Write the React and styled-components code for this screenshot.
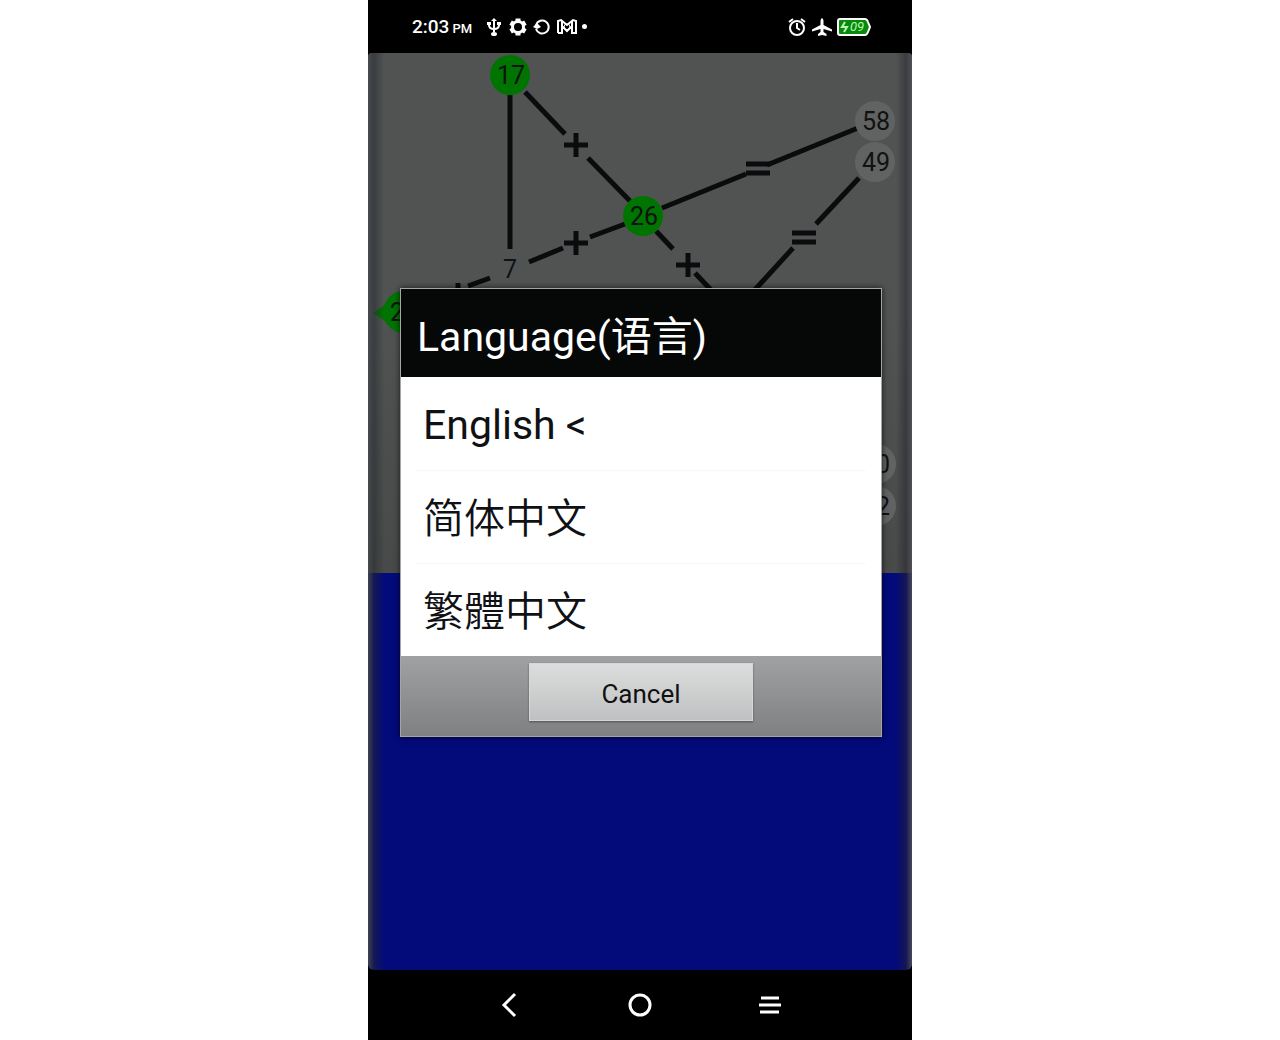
import React from "react";
import styled, { createGlobalStyle } from "styled-components";

const languages = [
  { id: "en", label: "English <" },
  { id: "zh-Hans", label: "简体中文" },
  { id: "zh-Hant", label: "繁體中文" },
];

const edges = [
  [142, 42, 142, 196],
  [157, 39, 197, 81],
  [220, 105, 262, 148],
  [161, 209, 195, 195],
  [222, 184, 257, 171],
  [294, 155, 378, 121],
  [399, 112, 490, 75],
  [288, 178, 305, 196],
  [327, 220, 344, 238],
  [491, 125, 448, 171],
  [425, 195, 384, 240],
  [122, 225, 100, 233],
];

const pluses = [
  [208, 92],
  [208, 190],
  [320, 212],
  [90, 242],
];

const equals = [
  [390, 115],
  [436, 184],
];

const nodes = [
  { x: 142, y: 22, text: "17", green: true },
  { x: 275, y: 163, text: "26", green: true },
  { x: 507, y: 68, text: "58" },
  { x: 507, y: 109, text: "49" },
  { x: 508, y: 411, text: "0", textX: 515 },
  { x: 508, y: 453, text: "2", textX: 515 },
];

export default function App() {
  return (
    <>
      <GlobalStyle />
      <Phone>
        <StatusBar />
        <Screen>
          <Board />
          <Ground />
          <Overlay>
            <LanguageDialog />
          </Overlay>
        </Screen>
        <NavBar />
      </Phone>
    </>
  );
}

function StatusBar() {
  return (
    <Status>
      <StatusGroup>
        <Clock>
          2:03<small>PM</small>
        </Clock>
        <StatusIcon $w={20} viewBox="0 0 20 20">
          <path d="M10 3v12M5 6v2q0 4 5 4t5-4V6" strokeWidth="2" />
          <path d="M10 1l3 3H7zM3 5h4v3H3zM13 5h4v3h-4z" fill="#fff" stroke="none" />
          <ellipse cx="10" cy="17" rx="3" ry="2" fill="#fff" stroke="none" />
        </StatusIcon>
        <StatusIcon $w={20} viewBox="0 0 20 20">
          <circle cx="10" cy="10" r="5.500" strokeWidth="3" />
          <path
            d="M10 1.500v3M10 15.500v3M2.600 5.700l2.600 1.500M14.800 12.800l2.600 1.500M2.600 14.300l2.600-1.500M14.800 7.200l2.600-1.500"
            strokeWidth="5"
          />
        </StatusIcon>
        <StatusIcon $w={20} viewBox="0 0 20 20">
          <path d="M4 8a6.500 6.500 0 1 1 0 4" strokeWidth="2" />
          <path d="M1 10l4-4 4 4-4 2z" fill="#fff" stroke="none" />
        </StatusIcon>
        <StatusIcon $w={22} viewBox="0 0 22 20">
          <path
            d="M2 16V4l3-1 6 5 6-5 3 1v12h-4V9M6 9v7H2M6 9l5 5 5-5M6 4v6M16 4v6"
            strokeWidth="2"
          />
          <circle cx="11" cy="10" r="3" strokeWidth="1" />
        </StatusIcon>
        <Dot />
      </StatusGroup>
      <StatusGroup>
        <StatusIcon $w={20} viewBox="0 0 20 20">
          <circle cx="10" cy="11" r="7" strokeWidth="2" />
          <path d="M10 6v5l3 2M2 5l4-3M14 2l4 3" strokeWidth="2" />
        </StatusIcon>
        <StatusIcon $w={22} viewBox="0 0 22 20">
          <path
            d="M11 1q1.500 1 1.500 3v4l8.500 4.500v2l-8.500-2.500v3l3 2v2L11 18l-4 1v-2l2.500-2v-3L1 14.500v-2L9.500 8V4q0-2 1.500-3z"
            fill="#fff"
            stroke="none"
          />
        </StatusIcon>
        <StatusIcon $w={34} viewBox="0 0 34 20">
          <path
            d="M3 2h25q2 0 3 3l2 5-2 5q-1 3-3 3H3q-2 0-2-2V4q0-2 2-2z"
            fill="#078a0c"
            strokeWidth="2"
          />
          <path d="M8 5l-3 5h5l-3 5" stroke="#b8f5b0" strokeWidth="2" />
          <BatteryText x="20" y="14">
            09
          </BatteryText>
        </StatusIcon>
      </StatusGroup>
    </Status>
  );
}

function Board() {
  return (
    <BoardArea>
      <Graph viewBox="0 0 544 520">
        {edges.map(([x1, y1, x2, y2]) => (
          <line key={`${x1}-${y1}`} x1={x1} y1={y1} x2={x2} y2={y2} strokeWidth="5" />
        ))}
        {pluses.map(([x, y]) => (
          <path key={`${x}-${y}`} d={`M${x - 12} ${y}h24M${x} ${y - 12}v24`} strokeWidth="5" />
        ))}
        {equals.map(([x, y]) => (
          <path key={`${x}-${y}`} d={`M${x - 12} ${y - 4}h24M${x - 12} ${y + 5}h24`} strokeWidth="5" />
        ))}
        {nodes.map((n) => (
          <g key={n.text}>
            <circle cx={n.x} cy={n.y} r="20" fill={n.green ? "#007400" : "#616262"} stroke="none" />
            <NodeText x={n.textX || n.x + 1} y={n.y + 9}>
              {n.text}
            </NodeText>
          </g>
        ))}
        <NodeText x="142" y="225">
          7
        </NodeText>
        <circle cx="36" cy="259" r="21" fill="#007400" stroke="none" />
        <path d="M5 260l16-11v22z" fill="#007400" stroke="none" />
        <NodeText x="29" y="268">
          2
        </NodeText>
      </Graph>
    </BoardArea>
  );
}

function LanguageDialog() {
  return (
    <Dialog role="dialog" aria-labelledby="language-title">
      <Title id="language-title">Language(语言)</Title>
      <List>
        {languages.map((l) => (
          <Item key={l.id}>
            <Option type="button" lang={l.id}>
              {l.label}
            </Option>
          </Item>
        ))}
      </List>
      <Footer>
        <CancelButton type="button">Cancel</CancelButton>
      </Footer>
    </Dialog>
  );
}

function NavBar() {
  return (
    <Nav>
      <NavButton type="button" aria-label="Back">
        <svg width="28" height="28" viewBox="0 0 28 28">
          <path d="M19 3L8 14l11 11" />
        </svg>
      </NavButton>
      <NavButton type="button" aria-label="Home">
        <svg width="28" height="28" viewBox="0 0 28 28">
          <circle cx="14" cy="14" r="10" />
        </svg>
      </NavButton>
      <NavButton type="button" aria-label="Menu">
        <svg width="28" height="28" viewBox="0 0 28 28">
          <path d="M5 7h18M3 14h22M4 21h19" />
        </svg>
      </NavButton>
    </Nav>
  );
}

const GlobalStyle = createGlobalStyle`
  * {
    box-sizing: border-box;
  }
  body {
    margin: 0;
    background: #fff;
    font-family: Roboto, "Noto Sans CJK SC", sans-serif;
  }
  button {
    font-family: inherit;
    border: 0;
    padding: 0;
    cursor: pointer;
  }
`;

const Phone = styled.main`
  display: flex;
  flex-direction: column;
  max-width: 544px;
  min-height: 100vh;
  margin: 0 auto;
  background: #000;
`;

const Status = styled.header`
  display: flex;
  align-items: center;
  justify-content: space-between;
  height: 53px;
  padding: 0 41px 0 44px;
  color: #fff;
`;

const StatusGroup = styled.div`
  display: flex;
  align-items: center;
  gap: 4px;
`;

const Clock = styled.time`
  width: 68px;
  font-size: 19px;
  font-weight: 500;
  white-space: nowrap;

  small {
    margin-left: 3px;
    font-size: 13px;
  }
`;

const StatusIcon = styled.svg`
  width: ${(p) => p.$w}px;
  height: 20px;
  fill: none;
  stroke: #fff;
`;

const BatteryText = styled.text`
  fill: #b8f5b0;
  stroke: none;
  font-size: 13px;
  font-style: italic;
  text-anchor: middle;
`;

const Dot = styled.span`
  width: 5px;
  height: 5px;
  border-radius: 50%;
  background: #fff;
`;

const Screen = styled.div`
  position: relative;
  display: flex;
  flex: 1;
  flex-direction: column;
  overflow: hidden;
  border-radius: 4px 4px 6px 6px;

  /* dark curved edges of the display */
  &::after {
    content: "";
    position: absolute;
    inset: 0;
    pointer-events: none;
    background: linear-gradient(
      to right,
      rgba(70, 74, 76, 0.9),
      rgba(36, 40, 44, 0.5) 6px,
      transparent 16px calc(100% - 16px),
      rgba(36, 36, 44, 0.5) calc(100% - 6px),
      rgba(80, 80, 88, 0.9)
    );
  }
`;

const BoardArea = styled.div`
  background: linear-gradient(#515353 50%, #484949);
`;

const Graph = styled.svg`
  display: block;
  width: 100%;
  fill: none;
  stroke: #0a0b0c;
`;

const NodeText = styled.text`
  fill: #101212;
  stroke: none;
  font-size: 25px;
  text-anchor: middle;
`;

const Ground = styled.div`
  flex: 1;
  background: #030a7a;
`;

const Overlay = styled.div`
  position: absolute;
  inset: 0;
  z-index: 1;
  display: flex;
  align-items: center;
  padding: 2px 30px 0 32px;
`;

const Dialog = styled.section`
  width: 100%;
  border: 1px solid #a4a6a6;
  background: #fff;
  box-shadow: 0 0 6px rgba(0, 0, 0, 0.7);
`;

const Title = styled.h1`
  display: flex;
  align-items: center;
  height: 88px;
  margin: 0;
  padding: 0 16px;
  background: #060707;
  color: #fff;
  font-size: 41px;
  font-weight: 400;
`;

const List = styled.ul`
  margin: 0;
  padding: 0 15px;
  list-style: none;
`;

const Item = styled.li`
  height: 93px;

  & + & {
    border-top: 1px solid #f8f8f8;
  }
`;

const Option = styled.button`
  width: 100%;
  height: 100%;
  padding: 3px 7px 0;
  background: transparent;
  color: #101114;
  font-size: 41px;
  font-weight: 400;
  text-align: left;

  &:lang(zh) {
    padding: 0 7px 5px;
    font-family: "Noto Sans CJK SC", sans-serif;
    font-weight: 350;
  }

  &:lang(zh-Hant) {
    font-family: "Noto Sans CJK TC", sans-serif;
  }
`;

const Footer = styled.footer`
  display: flex;
  align-items: flex-start;
  justify-content: center;
  height: 80px;
  padding-top: 7px;
  background: linear-gradient(#9fa1a3, #7e8082);
`;

const CancelButton = styled.button`
  width: 224px;
  height: 58px;
  padding-top: 3px;
  border: 1px solid #d6d8d8;
  background: linear-gradient(#dcdede, #bfc1c2);
  box-shadow: 0 1px 2px rgba(0, 0, 0, 0.4);
  color: #111;
  font-size: 26px;
`;

const Nav = styled.nav`
  display: flex;
  align-items: center;
  justify-content: center;
  height: 70px;
`;

const NavButton = styled.button`
  width: 130px;
  height: 44px;
  background: transparent;

  svg {
    display: block;
    margin: 0 auto;
    fill: none;
    stroke: #fff;
    stroke-width: 3px;
  }
`;
